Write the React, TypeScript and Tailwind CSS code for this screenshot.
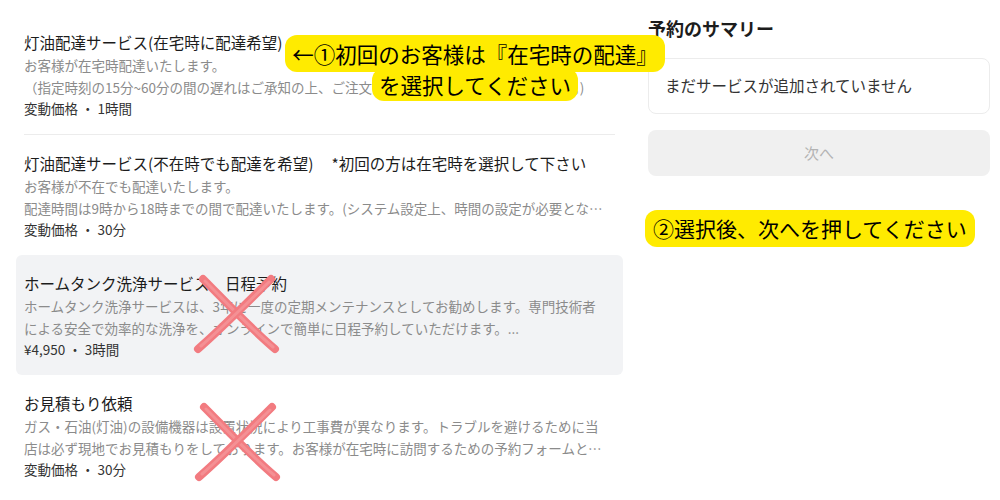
import React from 'react'

type Service = {
  title: string
  note?: string
  desc: string
  meta: string
  highlight?: boolean
  crossed?: 'a' | 'b'
}

const services: Service[] = [
  {
    title: '灯油配達サービス(在宅時に配達希望)',
    desc: 'お客様が在宅時配達いたします。\n（指定時刻の15分~60分の間の遅れはご承知の上、ご注文を何卒よろしくお願いいたします。)',
    meta: '変動価格 ・ 1時間',
  },
  {
    title: '灯油配達サービス(不在時でも配達を希望)',
    note: '*初回の方は在宅時を選択して下さい',
    desc: 'お客様が不在でも配達いたします。\n配達時間は9時から18時までの間で配達いたします。(システム設定上、時間の設定が必要となりますのでご了承ください)',
    meta: '変動価格 ・ 30分',
  },
  {
    title: 'ホームタンク洗浄サービス　日程予約',
    desc: 'ホームタンク洗浄サービスは、3年に一度の定期メンテナンスとしてお勧めします。専門技術者による安全で効率的な洗浄を、オンラインで簡単に日程予約していただけます。...',
    meta: '¥4,950 ・ 3時間',
    highlight: true,
    crossed: 'a',
  },
  {
    title: 'お見積もり依頼',
    desc: 'ガス・石油(灯油)の設備機器は設置状況により工事費が異なります。トラブルを避けるために当店は必ず現地でお見積もりをしております。お客様が在宅時に訪問するための予約フォームとなっております。',
    meta: '変動価格 ・ 30分',
    crossed: 'b',
  },
]

// hand-drawn looking red cross
function CrossMark({ className }: { className: string }) {
  return (
    <svg className={className} width="90" height="84" viewBox="0 0 90 84" fill="none">
      <path d="M10 8 C 30 28, 55 55, 82 78" stroke="#f27b80" strokeWidth="8" strokeLinecap="round" />
      <path d="M12 10 C 32 30, 56 56, 80 76" stroke="#f59a9d" strokeWidth="3" strokeLinecap="round" opacity="0.7" />
      <path d="M5 78 C 28 58, 52 34, 78 8" stroke="#f27b80" strokeWidth="8" strokeLinecap="round" />
      <path d="M8 75 C 30 56, 53 33, 76 11" stroke="#f59a9d" strokeWidth="3" strokeLinecap="round" opacity="0.7" />
    </svg>
  )
}

export default function App() {
  return (
    <div className="relative w-[1000px] h-[500px] overflow-hidden bg-white font-['Noto_Sans_CJK_JP','Noto_Sans',sans-serif] text-[#1c1c1c]">
      <div className="flex gap-[25px] pl-4 pr-[10px]">
        {/* Service list */}
        <div className="w-[607px] pt-[14px]">
          {services.map((s, i) => (
            <div key={s.title}>
              {i === 1 && <div className="mx-2 h-px bg-[#ececec]" />}
              <div className={`relative px-2 py-4 rounded-md ${s.highlight ? 'bg-[#f2f3f5]' : ''}`}>
                <div className="text-[15.5px] leading-[24px] whitespace-nowrap">
                  {s.title}
                  {s.note && <span className="ml-[18px]">{s.note}</span>}
                </div>
                <p className="pr-3 text-[13.5px] leading-[22px] text-[#8b8b8b] whitespace-pre-line line-clamp-2">
                  {s.desc}
                </p>
                <div className="text-[13.5px] leading-[20px] text-[#333]">{s.meta}</div>
                {s.crossed === 'a' && <CrossMark className="absolute left-[177px] top-[16px]" />}
                {s.crossed === 'b' && <CrossMark className="absolute left-[178px] top-[24px]" />}
              </div>
            </div>
          ))}
        </div>

        {/* Summary */}
        <div className="flex-1 pt-[15px]">
          <h2 className="text-[18px] leading-[26px] font-bold">予約のサマリー</h2>
          <div className="mt-[17px] h-[56px] flex items-center px-4 border border-[#ececec] rounded-lg text-[15.5px] text-[#333]">
            まだサービスが追加されていません
          </div>
          <button className="mt-4 w-full h-[46px] rounded-lg bg-[#f0f0f0] text-[15px] text-[#b3b3b3]">
            次へ
          </button>
          <div className="mt-[34px] -ml-[3px] w-fit px-2 rounded-xl bg-[#ffeb00] text-[21px] leading-[37px] text-black">
            ②選択後、次へを押してください
          </div>
        </div>
      </div>

      {/* Callout over the list */}
      <div className="absolute left-[285px] top-[35px] w-[380px] flex flex-col items-center text-[21.5px] text-black">
        <div className="w-full text-center rounded-xl bg-[#ffeb00] leading-[37px]">
          ←①初回のお客様は『在宅時の配達』
        </div>
        <div className="-mt-[4px] w-[206px] text-center rounded-xl bg-[#ffeb00] leading-[33px]">
          を選択してください
        </div>
      </div>
    </div>
  )
}
